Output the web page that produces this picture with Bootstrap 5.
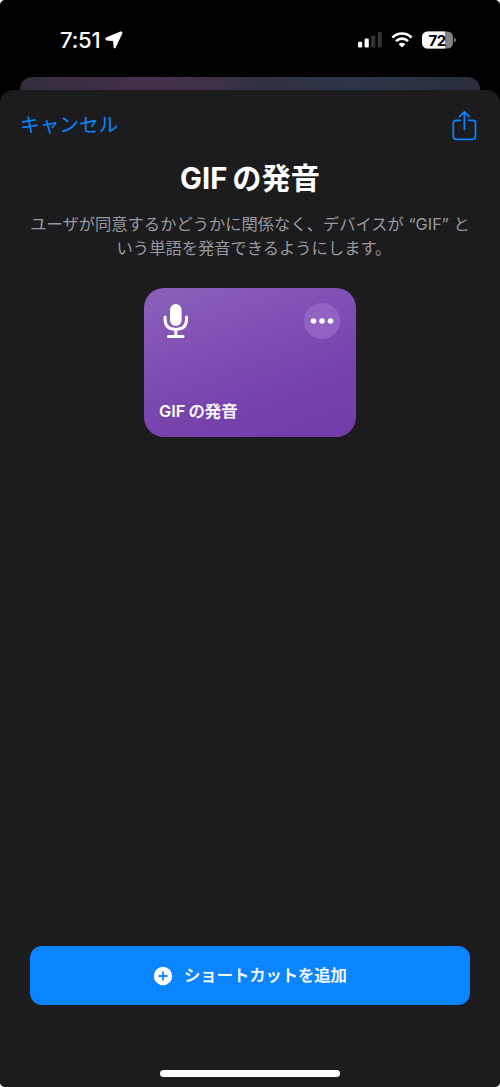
<!DOCTYPE html>
<html lang="ja">
<head>
<meta charset="utf-8">
<meta name="viewport" content="width=device-width, initial-scale=1">
<title>GIFの発音</title>
<link href="https://cdn.jsdelivr.net/npm/bootstrap@5.3.0/dist/css/bootstrap.min.css" rel="stylesheet">
<style>
html, body { height: 100%; }
body { background: #fff; font-family: Inter, "Noto Sans CJK JP", sans-serif; overflow: hidden; }
svg { display: block; flex: none; }
.phone { width: 500px; height: 1087px; background: #000; border-radius: 5px; }
.status { height: 77px; padding: 2px 44px 0 60px; }
.clock { font-size: 22px; font-weight: 500; letter-spacing: -.2px; line-height: 26px; width: 41px; }
.battery-text { font: 700 15px/1 Inter, sans-serif; letter-spacing: -.3px; }
.behind { height: 13px; margin: 0 20px; border-radius: 12px 12px 0 0; background: linear-gradient(90deg, #332d3b 0, #42304a 28%, #3c3145 44%, #2f3040 52%, #2e3549 72%, #2a2e3b 100%); }
.sheet { background: #1c1c1e; border-radius: 13px 13px 5px 5px; }
.topbar { height: 71px; padding: 0 23px 1px 20px; color: #0a84ff; }
.cancel { color: #0a84ff; font-size: 19.7px; line-height: 28px; }
.heading { font-size: 29.2px; line-height: 36px; font-weight: 700; white-space: nowrap; }
.about { color: #98989e; font-size: 16.3px; line-height: 24px; margin-top: 15px; white-space: nowrap; }
.second-line { padding-left: 8px; }
.tile { width: 212px; height: 149px; border-radius: 20px; margin-top: 28px; padding: 15px 16px 14px 15px; background: linear-gradient(160deg, #8b61bb 0, #7d4db2 42%, #7440ab 75%, #723dab 100%); }
.more { width: 36px; height: 36px; background: #9062c3; }
.tile-name { font-size: 16.4px; line-height: 24px; font-weight: 600; }
.tile-name span, .btn-add span { font-weight: 500; -webkit-text-stroke: .25px #fff; }
.btn-add { height: 59px; margin: 0 30px; border-radius: 12px; background: #0a84ff; color: #fff; font-size: 16.3px; padding: 0; border: 0; }
.btn-add:hover { background: #0a84ff; color: #fff; }
.home { width: 180px; height: 7px; margin-top: 65px; margin-bottom: 10px; }
</style>
</head>
<body>
<div class="phone d-flex flex-column overflow-hidden">
  <header class="status d-flex align-items-center justify-content-between text-white">
    <div class="d-flex align-items-center">
      <span class="clock">7:51</span>
      <svg class="ms-1" width="18" height="18" viewBox="0 0 18 18"><path d="M15.6 1.1 1.4 7.1Q.2 8 1.5 8.9L8.1 9.5Q8.6 9.6 8.7 10.2L9.1 16.2Q9.6 17.4 10.4 16.1L16.8 2.2Q17.2.7 15.6 1.1Z" fill="#fff" stroke="#fff" stroke-width="1.1"/></svg>
    </div>
    <div class="d-flex align-items-center">
      <svg width="26" height="18" viewBox="0 0 26 18"><rect x="1" y="10.7" width="4.2" height="5.8" rx="1.3" fill="#fff"/><rect x="7.6" y="7.6" width="4.2" height="8.9" rx="1.3" fill="#fff"/><rect x="14.1" y="4.4" width="4.2" height="12.1" rx="1.3" fill="#333"/><rect x="20.7" y="1.1" width="4.2" height="15.4" rx="1.3" fill="#333"/></svg>
      <svg style="margin-left:8px" width="22" height="18" viewBox="0 0 22 18"><g fill="none" stroke="#fff" stroke-width="2.7"><path d="M1.4 6.5Q5.6 2.5 11 2.5T20.6 6.5"/><path d="M5 10.1Q7.5 7.7 11 7.7T17 10.1"/></g><path d="M7.7 13.2Q11 10.5 14.3 13.2L11.5 16.1Q11 16.6 10.5 16.1Z" fill="#fff"/></svg>
      <svg style="margin-left:8px" width="35" height="18" viewBox="0 0 35 18"><defs><clipPath id="cell"><rect x="1" y=".5" width="31" height="17" rx="5.5"/></clipPath></defs><g clip-path="url(#cell)"><rect width="34" height="18" fill="#828282"/><rect width="24" height="18" fill="#fff"/></g><path d="M33 6.5Q34.8 7 34.8 9T33 11.5Z" fill="#828282"/><text class="battery-text" x="16.2" y="14.5" text-anchor="middle" fill="#000">72</text></svg>
    </div>
  </header>
  <div class="behind flex-shrink-0"></div>
  <main class="sheet flex-grow-1 d-flex flex-column">
    <nav class="topbar d-flex align-items-center justify-content-between">
      <a class="cancel text-decoration-none" href="#">キャンセル</a>
      <svg width="25" height="31" viewBox="0 0 25 31" fill="none" stroke="#0a84ff" stroke-width="1.7" stroke-linecap="round" stroke-linejoin="round"><path d="M8.2 10.3H4.3Q1.3 10.3 1.3 13.3V26.3Q1.3 29.3 4.3 29.3H20.5Q23.5 29.3 23.5 26.3V13.3Q23.5 10.3 20.5 10.3H16.6M12.4 19.5V2M7.5 6.7 12.4 1.8 17.3 6.7"/></svg>
    </nav>
    <section class="d-flex flex-column align-items-center text-center">
      <h1 class="heading text-white mb-0">GIF<span style="margin-left:5px">の発音</span></h1>
      <p class="about mb-0">ユーザが同意するかどうかに関係なく、デバイスが “GIF” と<br><span class="second-line">いう単語を発音できるようにします。</span></p>
      <div class="tile d-flex flex-column justify-content-between text-white text-start">
        <div class="d-flex justify-content-between">
          <svg width="34" height="36" viewBox="0 0 34 36"><rect x="11" y="1" width="11.6" height="22" rx="5.8" fill="#fff"/><path d="M6.1 14V16.6Q6.1 26.4 16.8 26.4T27.5 16.6V14M16.8 26.5V33.5M9.5 33.4H24" fill="none" stroke="#fff" stroke-width="3" stroke-linecap="round"/></svg>
          <div class="more rounded-circle d-flex align-items-center justify-content-center"><svg width="24" height="6" viewBox="0 0 24 6" fill="#fff"><circle cx="3.5" cy="3" r="2.8"/><circle cx="12" cy="3" r="2.8"/><circle cx="20.5" cy="3" r="2.8"/></svg></div>
        </div>
        <div class="tile-name">GIF<span style="margin-left:3px">の発音</span></div>
      </div>
    </section>
    <button class="btn btn-add mt-auto d-flex align-items-center justify-content-center" type="button">
      <svg width="20" height="20" viewBox="0 0 20 20"><circle cx="10" cy="10" r="9.2" fill="#fff"/><path d="M10 6.2V13.8M6.2 10H13.8" stroke="#0a84ff" stroke-width="1.8" stroke-linecap="round"/></svg>
      <span style="margin-left:11px">ショートカットを追加</span>
    </button>
    <div class="home bg-white rounded-pill align-self-center"></div>
  </main>
</div>
<script src="https://cdn.jsdelivr.net/npm/bootstrap@5.3.0/dist/js/bootstrap.bundle.min.js"></script>
</body>
</html>
